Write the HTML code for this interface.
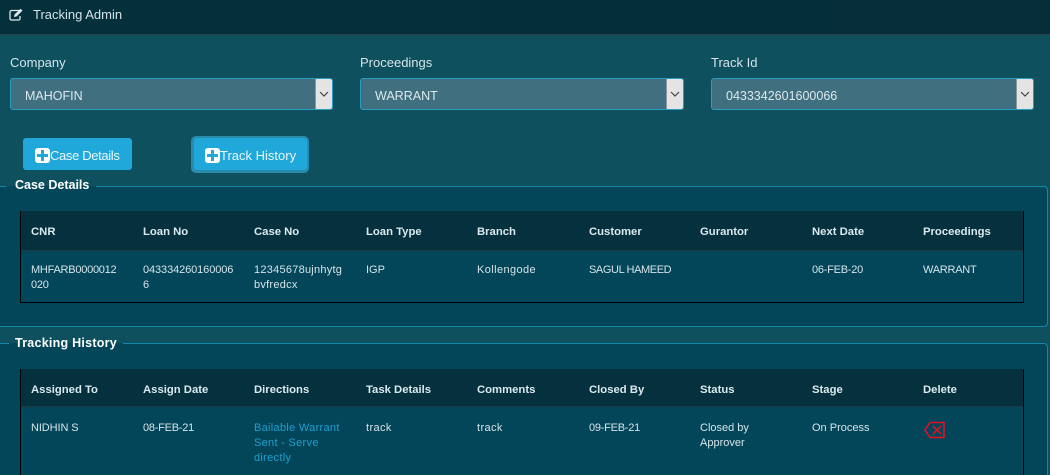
<!DOCTYPE html>
<html style="overflow:hidden;height:475px"><head><meta charset="utf-8">
<style>
html,body{margin:0;padding:0}
body{width:1050px;height:475px;overflow:hidden;position:relative;background:#0f505f;font-family:"Liberation Sans",sans-serif;color:#d5e4e8;font-size:11.5px}
#w{position:absolute;left:0;top:0;width:1050px;height:475px;overflow:hidden}
.a{position:absolute;white-space:nowrap}
#top{left:0;top:0;width:1050px;height:34px;background:linear-gradient(90deg,#03303b,#052e3a);border-bottom:1px solid #2b3f45}
.lbl{font-size:13px;top:55px;color:#d5e4e8}
.sel{top:78px;height:30px;background:#40707f;border:1px solid #2a9dc0;border-radius:3px;box-sizing:content-box}
.sel span{position:absolute;left:14px;top:10px;font-size:12.5px;color:#dce8ec}
.sel i{position:absolute;right:0;top:0;width:16px;height:30px;background:#e4e4e4;border-left:1px solid #8a9a9f;border-radius:0 2px 2px 0}
.sel svg{position:absolute;left:3px;top:12px}
.btn{background:#20a8da;border-radius:3px;color:#eaf6fb;font-size:13px;height:32px;line-height:32px}
.plus{position:absolute;width:15px;height:15px;background:#fff;border-radius:3px}
.plus:before{content:"";position:absolute;left:6px;top:2px;width:3px;height:11px;background:#20a8da}
.plus:after{content:"";position:absolute;left:2px;top:6px;width:11px;height:3px;background:#20a8da}
.fs{left:0;width:1048px;border:1px solid #1488ab;border-left:none;border-radius:0 4px 4px 0;background:#03465a;box-sizing:border-box}
.leg{padding:0 6px;font-weight:bold;font-size:12.5px;color:#fff;height:16px;line-height:16px}
.tb{left:20px;width:1004px;border-left:1px solid #000;border-right:1px solid #000;box-sizing:border-box}
.th{left:20px;width:1004px;background:#05303e;border-bottom:1px solid #1f3a44;box-sizing:border-box}
.h{font-weight:bold;font-size:11.3px;color:#dbe9ed}
.c{font-size:11px;line-height:15px;color:#d5e4e8}
.u{letter-spacing:-.25px}
.l{letter-spacing:.4px}
.link{color:#1f9fd0}
</style></head><body><div id="w">
<div class="a" id="top"></div>
<svg class="a" style="left:9px;top:8px" width="15" height="13" viewBox="0 0 15 13" fill="none"><path d="M10 2.500H2.500a1.500 1.500 0 0 0-1.500 1.500V10.500a1.500 1.500 0 0 0 1.500 1.500H9.500a1.500 1.500 0 0 0 1.500-1.500V8" stroke="#dfe9ec" stroke-width="1.300"/><path d="M5.500 6.500L11.500 .8l2 1.800L7.500 8.500 5 9z" fill="#dfe9ec"/></svg>
<div class="a" style="left:33px;top:7px;font-size:13px;color:#d5e2e5">Tracking Admin</div>

<div class="a lbl" style="left:10px">Company</div>
<div class="a lbl" style="left:360px">Proceedings</div>
<div class="a lbl" style="left:711px">Track Id</div>

<div class="a sel" style="left:10px;width:321px"><span>MAHOFIN</span><i><svg width="10" height="6" viewBox="0 0 10 6" fill="none"><path d="M1 1l4 4 4-4" stroke="#444" stroke-width="1.200"/></svg></i></div>
<div class="a sel" style="left:360px;width:322px"><span>WARRANT</span><i><svg width="10" height="6" viewBox="0 0 10 6" fill="none"><path d="M1 1l4 4 4-4" stroke="#444" stroke-width="1.200"/></svg></i></div>
<div class="a sel" style="left:711px;width:321px"><span>0433342601600066</span><i><svg width="10" height="6" viewBox="0 0 10 6" fill="none"><path d="M1 1l4 4 4-4" stroke="#444" stroke-width="1.200"/></svg></i></div>

<div class="a btn" style="left:23px;top:138px;width:109px"></div>
<div class="a plus" style="left:35px;top:148px"></div>
<div class="a" style="left:50px;top:148px;font-size:13px;letter-spacing:-.35px;color:#eaf6fb">Case Details</div>

<div class="a" style="left:191px;top:136px;width:118px;height:37px;background:#2a8bab;border-radius:5px"></div>
<div class="a btn" style="left:194px;top:138px;width:113px"></div>
<div class="a plus" style="left:205px;top:148px"></div>
<div class="a" style="left:220px;top:148px;font-size:13px;color:#eaf6fb">Track History</div>

<div class="a fs" style="top:186px;height:141px"></div>
<div class="a" style="left:6px;top:178px;width:90px;height:9px;background:#0f505f"></div>
<div class="a leg" style="left:9px;top:177px;background:linear-gradient(#0f505f 9px,#03465a 9px)">Case Details</div>

<div class="a th" style="top:211px;height:40px"></div>
<div class="a tb" style="top:211px;height:92px;border-bottom:1px solid #000"></div>
<div class="a h" style="left:31px;top:226px">CNR</div>
<div class="a h" style="left:143px;top:226px">Loan No</div>
<div class="a h" style="left:254px;top:226px">Case No</div>
<div class="a h" style="left:366px;top:226px">Loan Type</div>
<div class="a h" style="left:477px;top:226px">Branch</div>
<div class="a h" style="left:589px;top:226px">Customer</div>
<div class="a h" style="left:700px;top:226px">Gurantor</div>
<div class="a h" style="left:812px;top:226px">Next Date</div>
<div class="a h" style="left:923px;top:226px">Proceedings</div>
<div class="a c u" style="left:31px;top:263px">MHFARB0000012<br>020</div>
<div class="a c" style="left:143px;top:263px;letter-spacing:-.1px">043334260160006<br>6</div>
<div class="a c" style="left:254px;top:263px;letter-spacing:.25px">12345678ujnhytg<br>bvfredcx</div>
<div class="a c" style="left:366px;top:263px">IGP</div>
<div class="a c l" style="left:477px;top:263px">Kollengode</div>
<div class="a c" style="left:589px;top:263px;letter-spacing:-.4px">SAGUL HAMEED</div>
<div class="a c u" style="left:812px;top:263px">06-FEB-20</div>
<div class="a c u" style="left:923px;top:263px">WARRANT</div>

<div class="a fs" style="top:343px;height:132px;border-bottom:none;border-radius:0 4px 0 0"></div>
<div class="a" style="left:6px;top:335px;width:118px;height:8px;background:#0f505f"></div>
<div class="a leg" style="left:9px;top:335px;letter-spacing:.25px;background:linear-gradient(#0f505f 8px,#03465a 8px)">Tracking History</div>

<div class="a th" style="top:369px;height:38px"></div>
<div class="a tb" style="top:369px;height:106px"></div>
<div class="a h" style="left:31px;top:384px">Assigned To</div>
<div class="a h" style="left:143px;top:384px">Assign Date</div>
<div class="a h" style="left:254px;top:384px">Directions</div>
<div class="a h" style="left:366px;top:384px">Task Details</div>
<div class="a h" style="left:477px;top:384px">Comments</div>
<div class="a h" style="left:589px;top:384px">Closed By</div>
<div class="a h" style="left:700px;top:384px">Status</div>
<div class="a h" style="left:812px;top:384px">Stage</div>
<div class="a h" style="left:923px;top:384px">Delete</div>
<div class="a c" style="left:31px;top:421px;letter-spacing:-.1px">NIDHIN S</div>
<div class="a c u" style="left:143px;top:421px">08-FEB-21</div>
<div class="a c link" style="left:254px;top:421px;letter-spacing:.3px">Bailable Warrant<br>Sent - Serve<br>directly</div>
<div class="a c l" style="left:366px;top:421px">track</div>
<div class="a c l" style="left:477px;top:421px">track</div>
<div class="a c u" style="left:589px;top:421px">09-FEB-21</div>
<div class="a c" style="left:700px;top:421px">Closed by<br>Approver</div>
<div class="a c" style="left:812px;top:421px">On Process</div>
<svg class="a" style="left:924px;top:421px" width="22" height="18" viewBox="0 0 22 18" fill="none"><path d="M6 1.500H20V16.500H6L1 9z" stroke="#e81020" stroke-width="1.500"/><path d="M9 5l8 8M17 5l-8 8" stroke="#e81020" stroke-width="1.500"/></svg>
</div></body></html>
